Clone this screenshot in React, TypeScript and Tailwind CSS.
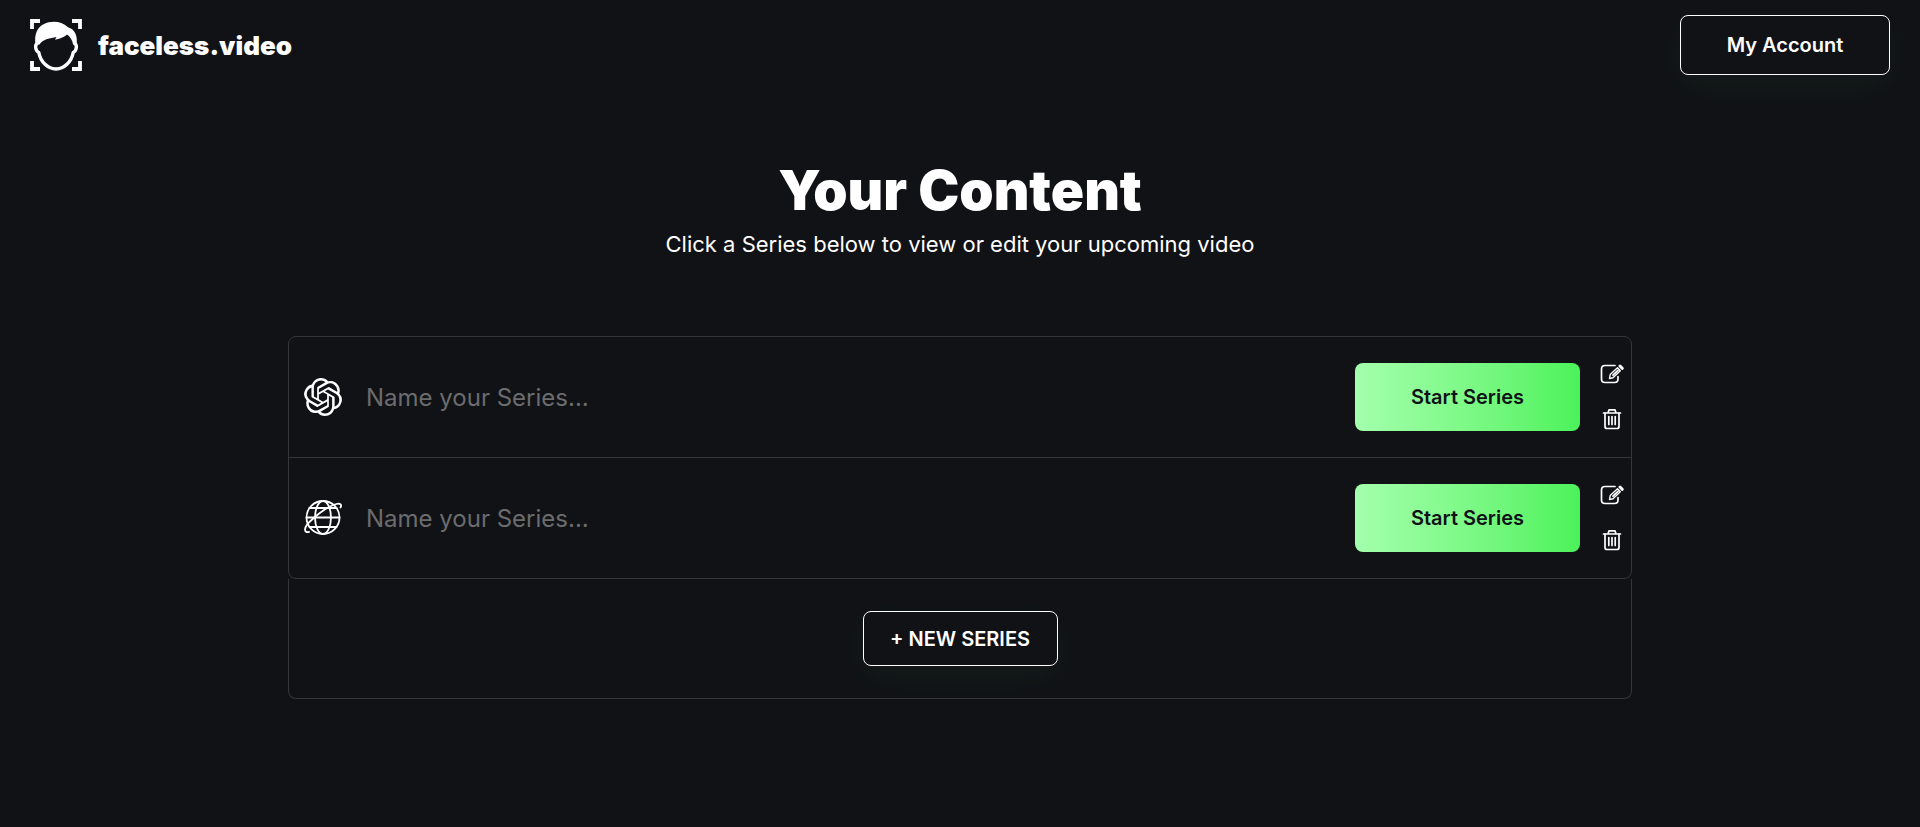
import React, { useState } from "react";
import { SiOpenai } from "react-icons/si";

type Kind = "ai" | "web";
interface Series { id: number; kind: Kind; name: string }

const INIT: Series[] = [
  { id: 1, kind: "ai",  name: "" },
  { id: 2, kind: "web", name: "" },
];

const outlineBtn = "rounded-lg border border-white bg-[#111216] font-semibold text-white shadow-[0_10px_40px_rgba(74,242,90,0.05)]";

const Logo = () => (
  <svg viewBox="0 0 52 52" className="size-[52px]" fill="none" stroke="#fff" aria-hidden="true">
    <path d="M2 10V2H10M42 2H50V10M2 42V50H10M42 50H50V42" strokeWidth="3.8" />
    <path
      d="M7.200 24.500C4.500 26 5.500 32 8.800 33.500C10.500 43 18 50 26 50C34 50 41.500 43 43.200 33.500C46.500 32 47.500 26 44.800 24.500"
      strokeWidth="3.4" strokeLinejoin="round" strokeLinecap="round"
    />
    <path
      d="M5.500 25.500C4 15 7.500 8 14 5C21 1.500 31 1.500 38 8.200C45 10 48 17.500 46.500 25.500L43 25.500C42.500 21.500 40.500 18 37 15.500C34 18 31 19.500 25 20.800L26.500 18C20 19.500 13.500 19.500 9.500 25.500Z"
      fill="#fff" stroke="none"
    />
  </svg>
);

const Globe = () => (
  <svg viewBox="0 0 38 38" className="size-[38px]" fill="none" stroke="#fff" strokeWidth="1.8" strokeLinecap="round" aria-hidden="true">
    <circle cx="19" cy="18.500" r="16.500" />
    <ellipse cx="19" cy="18.500" rx="8" ry="16.500" />
    <path d="M2.500 18.500H35.500M5.500 9H32.500M5.500 28H32.500" />
    <path d="M5 33C-1 34 0 27.500 7 21.500C15 14 25 7 32.500 5C36.500 4 38 6 36.500 8.500" />
  </svg>
);

const EditIcon = () => (
  <svg viewBox="0 0 24 20" className="h-5 w-6" fill="none" stroke="#fff" strokeWidth="1.7" strokeLinecap="round" strokeLinejoin="round" aria-hidden="true">
    <path d="M15 1.500H5Q1.500 1.500 1.500 5V15Q1.500 18.500 5 18.500H14.500Q18 18.500 18 15V12.500" />
    <path d="M9.500 14.500L10.200 10.500L17.500 3.800L20.300 6.800L13 13.700Z" strokeWidth="1.4" />
    <path d="M13 11.200L18 6.300" strokeWidth="1.8" />
    <path d="M20 2L22.200 4.300" strokeWidth="3" />
  </svg>
);

const TrashIcon = () => (
  <svg viewBox="0 0 20 22" className="h-[22px] w-5" fill="none" stroke="#fff" strokeWidth="1.7" strokeLinecap="round" strokeLinejoin="round" aria-hidden="true">
    <path d="M1.500 5H18.500M6 5L7 1.800H13L14 5" />
    <path d="M3 5V18.500Q3 20.500 5 20.500H15Q17 20.500 17 18.500V5" />
    <path d="M6.800 8.500V16.500M10 8.500V16.500M13.200 8.500V16.500" />
  </svg>
);

interface RowProps { series: Series; onName: (name: string) => void; onDelete: () => void }

const SeriesRow = ({ series, onName, onDelete }: RowProps) => (
  <li className="flex h-[121px] items-center border-b border-[#35363a] pr-[7px] pl-[15px] last:h-[120px] last:border-b-0">
    {series.kind === "ai" ? <SiOpenai className="size-[38px] shrink-0" aria-hidden="true" /> : <Globe />}
    <input
      type="text"
      aria-label="Series name"
      placeholder="Name your Series..."
      value={series.name}
      onChange={e => onName(e.target.value)}
      className="ml-6 h-12 min-w-0 flex-1 bg-transparent text-2xl text-white outline-none placeholder:text-[#6b6c6e]"
    />
    <button className="ml-4 h-[68px] w-[225px] shrink-0 rounded-lg bg-linear-to-r from-[#a3ffac] to-[#4af25a] text-xl font-semibold text-[#111216]">
      Start Series
    </button>
    <div className="ml-5 flex shrink-0 flex-col items-center gap-6">
      <button aria-label="Edit series" className="block"><EditIcon /></button>
      <button aria-label="Delete series" className="block" onClick={onDelete}><TrashIcon /></button>
    </div>
  </li>
);

export default function App() {
  const [items, setItems] = useState<Series[]>(INIT);

  const rename = (id: number, name: string) => setItems(p => p.map(s => s.id === id ? { ...s, name } : s));
  const remove = (id: number) => setItems(p => p.filter(s => s.id !== id));
  const add = () => setItems(p => [...p, { id: Date.now(), kind: "ai", name: "" }]);

  return (
    <div className="min-h-screen bg-[#111216] pb-16 font-['Inter',sans-serif] text-white">
      <header className="flex items-center justify-between px-[30px] py-[15px]">
        <a href="#" className="flex items-center gap-4">
          <Logo />
          <span className="text-[26px] font-black">faceless.video</span>
        </a>
        <button className={`h-[60px] w-[210px] text-xl ${outlineBtn}`}>My Account</button>
      </header>

      <main>
        <div className="px-4 pt-[70px] text-center">
          <h1 className="text-[55px] leading-[60px] font-black">Your Content</h1>
          <p className="mt-2 text-[22px] leading-8">Click a Series below to view or edit your upcoming video</p>
        </div>

        <section className="mx-auto mt-[76px] w-[70%]">
          <ul className="rounded-lg border border-[#35363a]">
            {items.map(s => (
              <SeriesRow key={s.id} series={s} onName={n => rename(s.id, n)} onDelete={() => remove(s.id)} />
            ))}
          </ul>
          <div className="flex h-[120px] items-center justify-center rounded-b-lg border border-t-0 border-[#35363a]">
            <button onClick={add} className={`h-[55px] w-[195px] text-xl ${outlineBtn}`}>+ NEW SERIES</button>
          </div>
        </section>
      </main>
    </div>
  );
}
